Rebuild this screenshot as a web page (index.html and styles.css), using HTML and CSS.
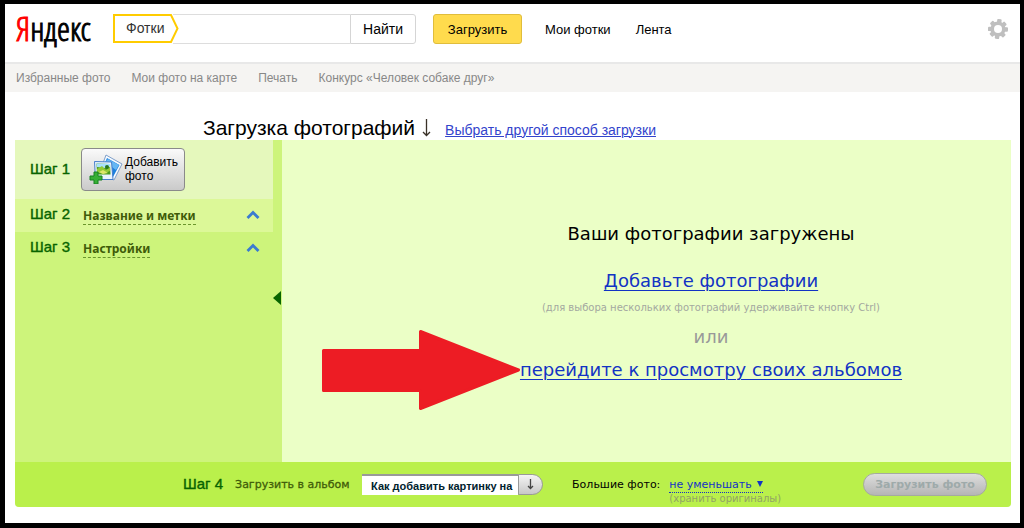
FILE: index.html
```html
<!DOCTYPE html>
<html lang="ru">
<head>
<meta charset="utf-8">
<title>Яндекс.Фотки</title>
<link rel="stylesheet" href="styles.css">
</head>
<body>
<div class="page">
  <header class="header">
    <a class="logo" href="#"><span class="logo-first">Я</span>ндекс</a>
    <form class="search">
      <div class="search-scope">
        <svg class="scope-shape" viewBox="0 0 66 29" aria-hidden="true"><path d="M1 1H58L64.500 14.500L58 28H1Z" fill="#fff" stroke="#fc0" stroke-width="2"/></svg>
        <label class="scope-text" for="query">Фотки</label>
      </div>
      <input class="search-input" id="query" type="text">
      <button class="search-button" type="button">Найти</button>
    </form>
    <button class="upload" type="button">Загрузить</button>
    <nav class="links">
      <a href="#">Мои фотки</a>
      <a href="#">Лента</a>
    </nav>
    <button class="settings" type="button" aria-label="Настройки сервиса">
      <svg viewBox="0 0 20 20" width="20" height="20" aria-hidden="true">
        <g fill="#bfbfbf">
          <circle cx="10" cy="10" r="7.600"/>
          <rect x="8" y="0" width="4.400" height="20" rx="1" transform="rotate(8 10 10)"/>
          <rect x="8" y="0.300" width="4.400" height="19.400" rx="1" transform="rotate(50 10 10)"/>
          <rect x="8" y="0" width="4.400" height="20" rx="1" transform="rotate(92 10 10)"/>
          <rect x="8" y="0.300" width="4.400" height="19.400" rx="1" transform="rotate(138 10 10)"/>
        </g>
        <circle cx="10" cy="10" r="4" fill="#fff"/>
      </svg>
    </button>
  </header>

  <nav class="subnav">
    <a href="#">Избранные фото</a>
    <a href="#">Мои фото на карте</a>
    <a href="#">Печать</a>
    <a href="#">Конкурс «Человек собаке друг»</a>
  </nav>

  <div class="title-row">
    <h1 class="title">Загрузка фотографий
      <svg viewBox="0 0 9 18" width="9" height="18" aria-hidden="true"><path d="M4.500 0V16M1 13L4.500 16.500L8 13" fill="none" stroke="#3a3228" stroke-width="1.300"/></svg>
    </h1>
    <a class="other-way" href="#">Выбрать другой способ загрузки</a>
  </div>

  <main class="uploader">
    <div class="columns">
      <aside class="steps">
        <section class="step step-one">
          <h2 class="step-name">Шаг 1</h2>
          <button class="add-photo" type="button">
            <svg viewBox="0 0 34 30" width="34" height="30" aria-hidden="true">
              <path d="M17 1L33 10L25 26L10 20Z" fill="#f7fbff" stroke="#7f9fca"/>
              <path d="M18 4L30.500 11L24 23L12 18Z" fill="#1d80dd"/>
              <path d="M19 5L30 11L27 16L16 8Z" fill="#65b7f4"/>
              <path d="M5.500 7.500L22.500 8L24 25.500H6.500Z" fill="#e9f4ff" stroke="#487fcb"/>
              <path d="M7.500 9.500L21 10L21.500 20.500H8Z" fill="#4a9a20"/>
              <path d="M7.500 9.500L21 10V13L15 14L8 13Z" fill="#a8e1fb"/>
              <path d="M8 15L13 12L17 16L21 13V17L14 20L8 18Z" fill="#93c936"/>
              <circle cx="18" cy="13" r="2" fill="#28751c"/>
              <path d="M10 18L14 16L19 19L14 20Z" fill="#dde76b"/>
              <path d="M5 18H9V22H13V26H9V30H5V26H1V22H5Z" fill="#36af35" stroke="#168223"/>
            </svg>
            <span>Добавить<br>фото</span>
          </button>
        </section>
        <section class="step step-two">
          <h2 class="step-name">Шаг 2</h2>
          <a class="step-link" href="#">Название и метки</a>
          <svg class="chevron" viewBox="0 0 14 10" width="14" height="10" aria-hidden="true"><path d="M1.500 9L7 3.500L12.500 9" fill="none" stroke="#3a7bd0" stroke-width="2.800"/></svg>
        </section>
        <section class="step step-three">
          <h2 class="step-name">Шаг 3</h2>
          <a class="step-link" href="#">Настройки</a>
          <svg class="chevron" viewBox="0 0 14 10" width="14" height="10" aria-hidden="true"><path d="M1.500 9L7 3.500L12.500 9" fill="none" stroke="#3a7bd0" stroke-width="2.800"/></svg>
        </section>
        <button class="collapse" type="button" aria-label="Свернуть"><svg viewBox="0 0 8 14" width="8" height="14" aria-hidden="true"><path d="M8 0V14L0 7Z" fill="#086400"/></svg></button>
      </aside>
      <section class="result">
        <p class="done">Ваши фотографии загружены</p>
        <a class="big-link" href="#">Добавьте фотографии</a>
        <p class="hint">(для выбора нескольких фотографий удерживайте кнопку Ctrl)</p>
        <p class="or">или</p>
        <div class="albums">
          <a class="big-link" href="#">перейдите к просмотру своих альбомов</a>
          <svg class="pointer" viewBox="0 0 198 82" width="198" height="82" aria-hidden="true"><path d="M1.500 21.500H98.500V2.500L196.500 41L98.500 79.500V61.500H1.500Z" fill="#ed1c24" stroke="#ed1c24" stroke-width="3" stroke-linejoin="round"/></svg>
        </div>
      </section>
    </div>

    <footer class="bottom">
      <h2 class="step-name">Шаг 4</h2>
      <span class="album-label" id="album-label">Загрузить в альбом</span>
      <div class="album">
        <select class="album-select" aria-labelledby="album-label"><option>Как добавить картинку на</option></select>
        <span class="album-arrow"><svg viewBox="0 0 7 11" width="7" height="11" aria-hidden="true"><path d="M3.500 0V9M1 7L3.500 9.500L6 7" fill="none" stroke="#444" stroke-width="1.300"/></svg></span>
      </div>
      <span class="large-label">Большие фото:</span>
      <div class="resize">
        <button class="resize-link" type="button">не уменьшать <svg viewBox="0 0 6 6" width="6" height="6" aria-hidden="true"><path d="M0 0H6L3 6Z" fill="#1233c4"/></svg></button>
        <span class="resize-note">(хранить оригиналы)</span>
      </div>
      <button class="submit" type="button" disabled>Загрузить фото</button>
    </footer>
  </main>
</div>
</body>
</html>
```
FILE: styles.css
```css
* { box-sizing: border-box; }

body {
  margin: 0;
  background: #fff;
  color: #000;
  font-family: "Liberation Sans", Arial, sans-serif;
  font-size: 13px;
}

h1, h2, p { margin: 0; font-weight: normal; }
button, input, select { font: inherit; margin: 0; padding: 0; border: 0; background: none; color: inherit; }
svg { display: block; }

.page {
  display: flex;
  flex-direction: column;
  min-height: 100vh;
  border: 5px solid #000;
  border-top-width: 4px;
  border-right-width: 4px;
}

.header {
  display: flex;
  align-items: center;
  height: 60px;
  padding: 0 12px 8px 11px;
  border-bottom: 2px solid #e8e8e8;
}

.logo {
  width: 97px;
  font-family: "Open Sans Condensed Light", "Open Sans Condensed", "Roboto Condensed", "Liberation Sans", sans-serif;
  font-size: 33px;
  font-weight: 300;
  line-height: 40px;
  color: #000;
  text-decoration: none;
  -webkit-text-stroke: 1px;
}
.logo-first { color: #f00; }

.search { display: flex; width: 303px; height: 30px; }
.search-scope { position: relative; z-index: 1; width: 66px; height: 30px; }
.scope-shape { width: 66px; height: 29px; }
.scope-text { position: absolute; left: 13px; top: 0; line-height: 29px; color: #333; font-size: 14px; }
.search-input {
  flex: 1;
  min-width: 0;
  margin-left: -6px;
  border-top: 1px solid #ddd;
  border-bottom: 1px solid #ddd;
  padding-left: 12px;
}
.search-button {
  width: 66px;
  border: 1px solid #d5d5d5;
  border-radius: 0 3px 3px 0;
  font-size: 14px;
}

.upload {
  width: 89px;
  height: 30px;
  margin-left: 17px;
  border: 1px solid #e0bd3c;
  border-radius: 3px;
  background: #ffdb4d;
}

.links { display: flex; gap: 25px; margin-left: 23px; }
.links a { color: #000; text-decoration: none; }
.settings { margin-left: auto; }

.subnav {
  display: flex;
  gap: 21px;
  height: 28px;
  padding-left: 11px;
  background: #f5f4f2;
  font-size: 12px;
  line-height: 28px;
}
.subnav a { color: #888; text-decoration: none; }

.title-row {
  display: flex;
  align-items: baseline;
  gap: 14px;
  height: 48px;
  padding: 23px 0 0 198px;
}
.title { display: flex; align-items: center; gap: 7px; font-size: 21px; line-height: 25px; }
.other-way { color: #3344cc; font-size: 14px; text-decoration-thickness: 1px; }

.uploader {
  display: flex;
  flex: 1;
  flex-direction: column;
  margin: 0 9px 16px 10px;
  border-radius: 0 0 4px 4px;
  overflow: hidden;
  background: #ebffc6;
}
.columns { display: flex; flex: 1; }

.steps {
  position: relative;
  width: 267px;
  padding-right: 9px;
  background: #cdf47b;
}
.step { display: flex; align-items: center; height: 33px; padding: 0 13px 3px 15px; }
.step-one { height: 59px; padding-bottom: 0; background: #e5f8bc; }
.step-two { background: #dcf898; }
.step-name { font-size: 15px; color: #086400; -webkit-text-stroke: 0.4px #086400; white-space: nowrap; }
.step .step-name { width: 53px; padding-bottom: 2px; }

.add-photo {
  display: flex;
  align-items: center;
  gap: 2px;
  width: 104px;
  height: 43px;
  margin-left: -2px;
  padding: 0 0 2px 7px;
  border: 1px solid #8a8a8a;
  border-radius: 4px;
  background: linear-gradient(#fafafa, #cacaca);
  font-size: 12px;
  line-height: 14px;
  text-align: left;
}
.step-link {
  margin-top: 3px;
  border-bottom: 1px dashed #6b962c;
  color: #3f5c09;
  font-family: "Noto Sans", Verdana, sans-serif;
  font-size: 12px;
  font-weight: bold;
  line-height: 17px;
  text-decoration: none;
}
.chevron { margin-left: auto; }
.collapse { position: absolute; right: 1px; top: 151px; }

.result {
  display: flex;
  flex: 1;
  flex-direction: column;
  align-items: center;
  padding: 82px 0 78px 129px;
  font-family: "DejaVu Sans", Verdana, sans-serif;
  font-size: 18px;
  line-height: 24px;
}
.done { margin-bottom: 23px; }
.big-link { color: #1233c4; text-underline-offset: 3px; text-decoration-thickness: 1px; }
.hint { margin-top: 7px; color: #a3a8a0; font-size: 10px; line-height: 16px; }
.or { margin: 9px 0; color: #999; }
.albums { position: relative; }
.pointer { position: absolute; right: 100%; top: 50%; margin: -41px 0 0; }

.bottom {
  display: flex;
  align-items: center;
  height: 45px;
  padding: 0 24px 0 168px;
  background: #baf04b;
  font-family: "DejaVu Sans", Verdana, sans-serif;
  font-size: 11px;
  white-space: nowrap;
}
.bottom .step-name { padding-bottom: 2px; font-family: "Liberation Sans", Arial, sans-serif; }
.album-label { width: 127px; margin-left: 12px; color: #3f5c09; -webkit-text-stroke: 0.3px #3f5c09; }
.album { display: flex; }
.album-select {
  width: 156px;
  height: 21px;
  padding-left: 9px;
  border-top: 2px solid #999;
  background: #fff;
  color: #00222e;
  font-family: "Liberation Sans", Arial, sans-serif;
  font-size: 11px;
  font-weight: bold;
  appearance: none;
}
.album-arrow {
  display: grid;
  place-items: center;
  width: 25px;
  height: 21px;
  border: 1px solid #999;
  border-radius: 0 11px 11px 0;
  background: linear-gradient(#f4f4f4, #c8c8c8);
}
.large-label { margin-left: 29px; }
.resize { display: flex; flex-direction: column; align-items: flex-start; margin-left: 9px; padding-top: 12px; }
.resize-link {
  display: flex;
  align-items: center;
  gap: 5px;
  border-bottom: 1px dotted #1233c4;
  color: #1233c4;
  line-height: 15px;
}
.resize-note { color: #91a365; font-size: 10px; line-height: 12px; }
.submit {
  width: 124px;
  height: 23px;
  margin-left: auto;
  border: 1px solid #a5aaa0;
  border-radius: 12px;
  background: linear-gradient(#dedede, #b5b5b5);
  color: #9eaaaa;
  font-weight: bold;
}
```
